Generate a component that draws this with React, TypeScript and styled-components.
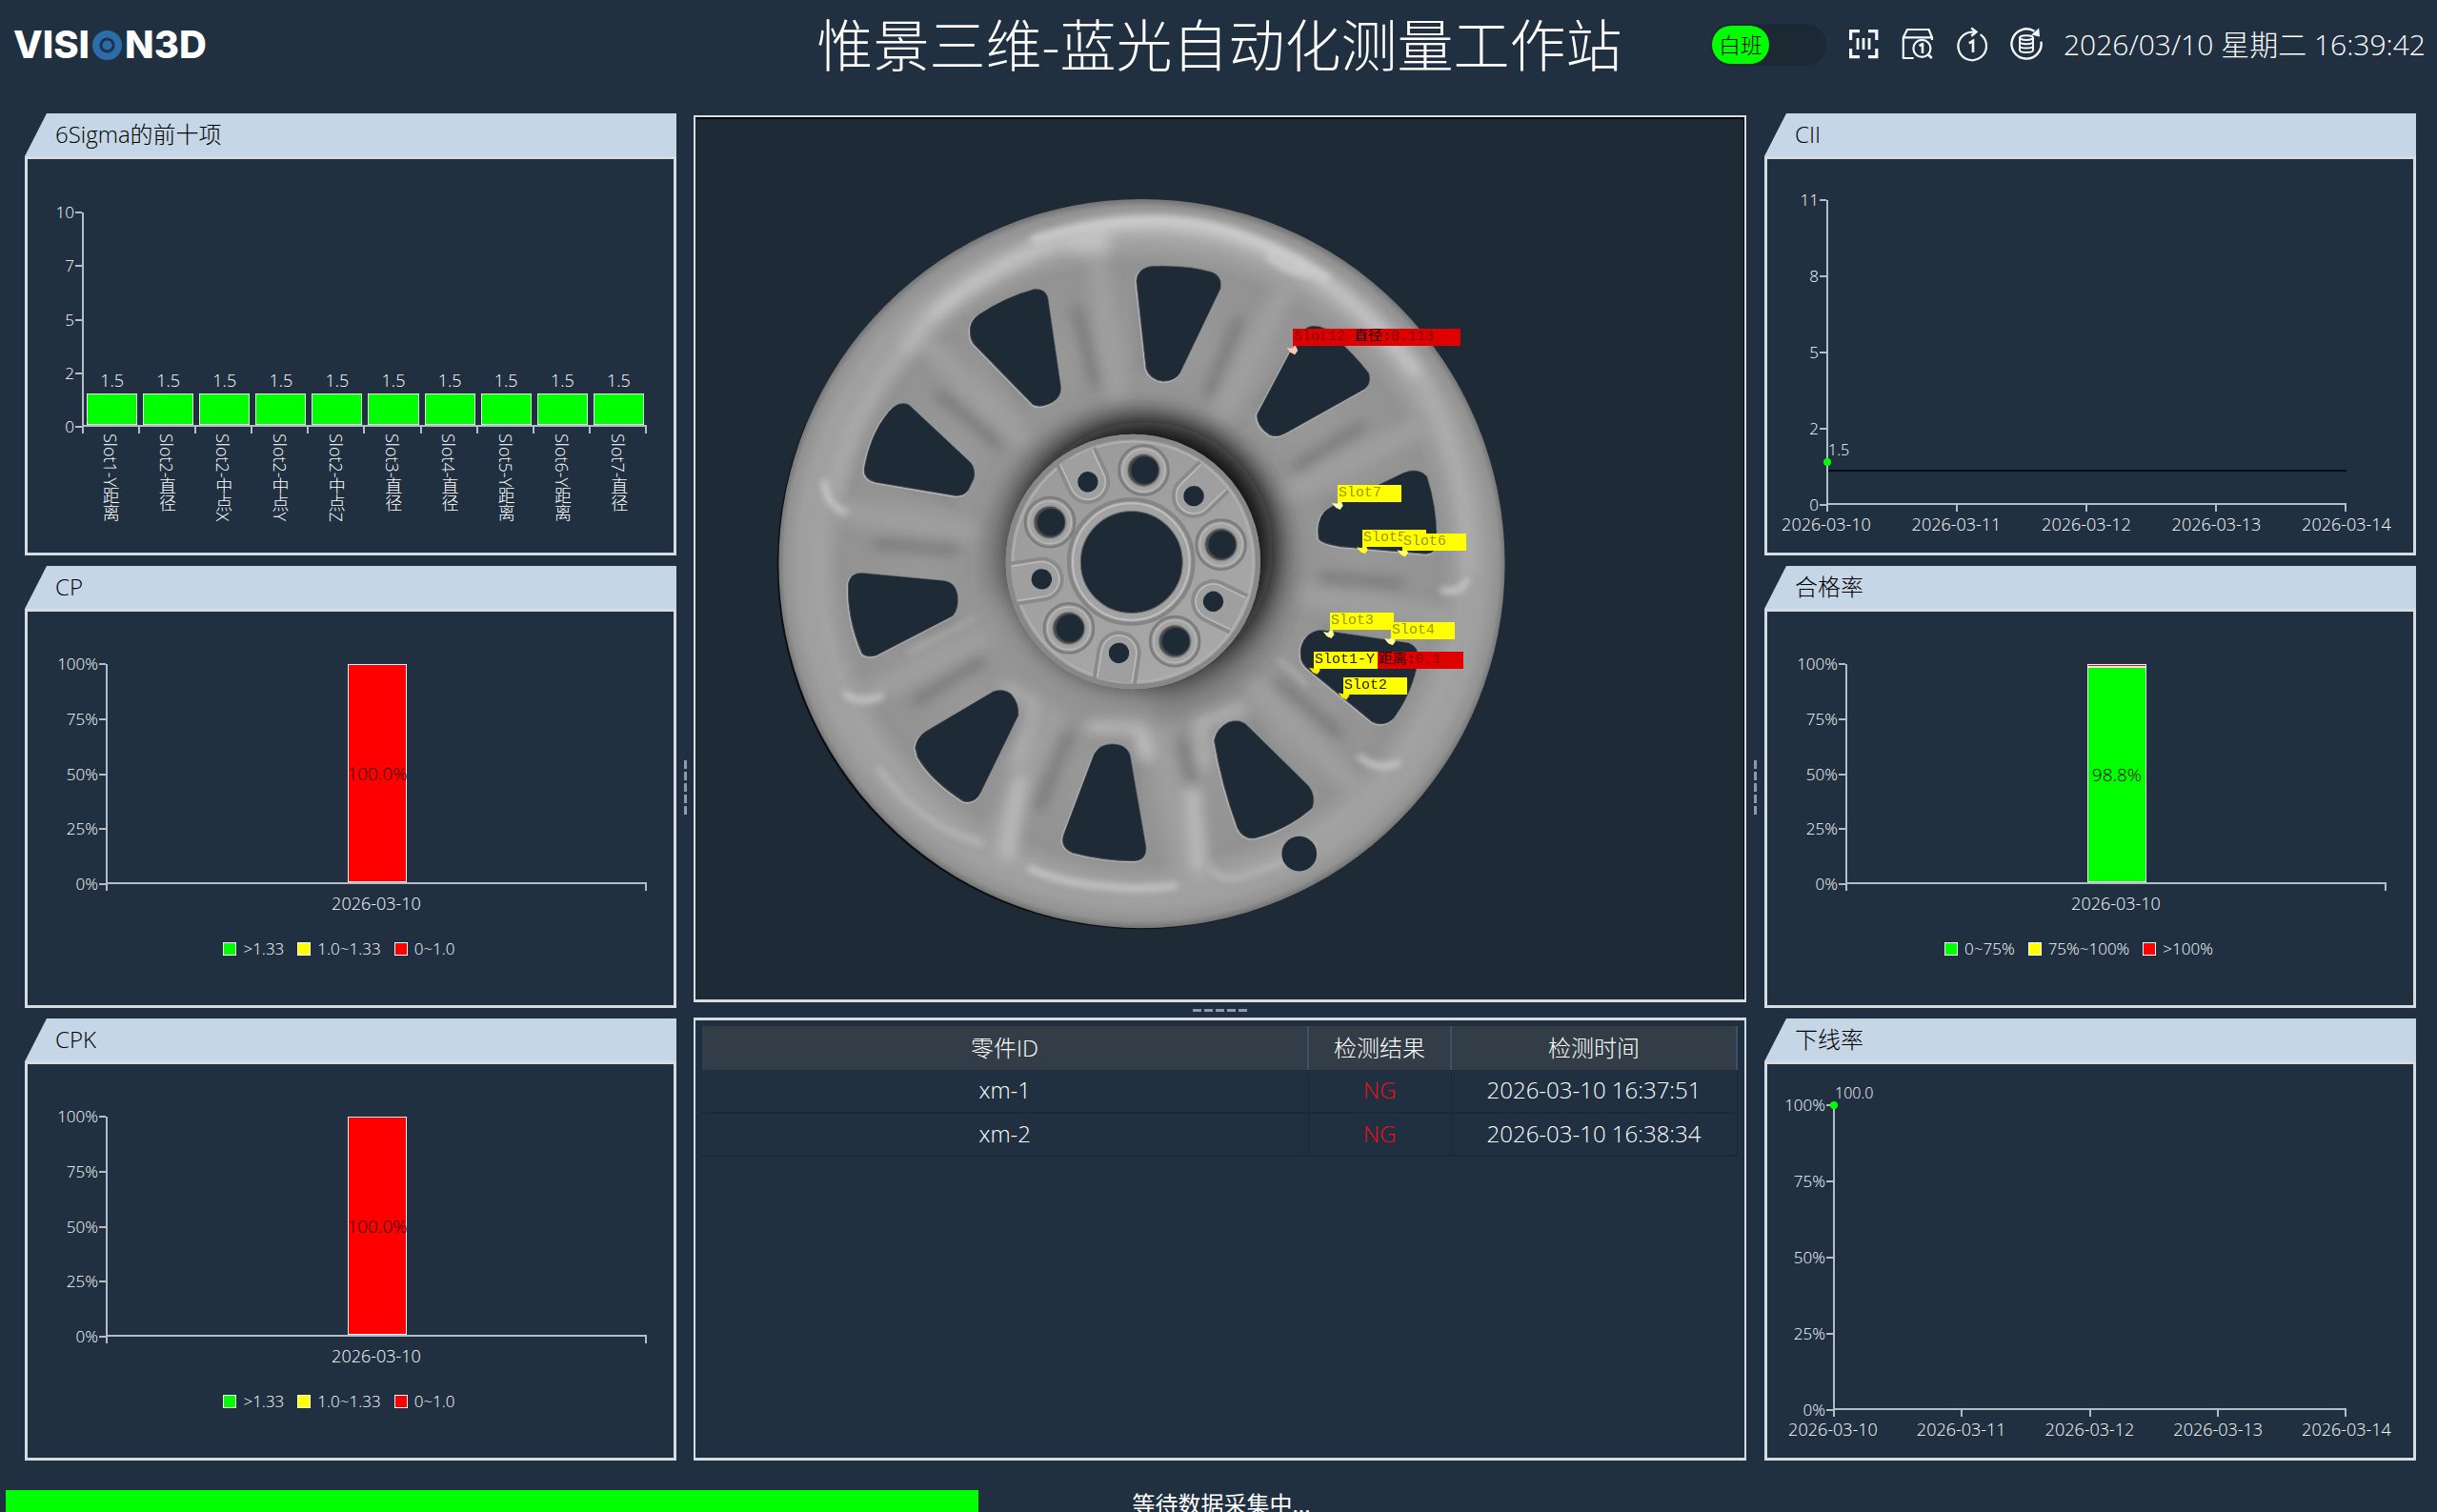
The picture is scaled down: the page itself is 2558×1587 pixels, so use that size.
import React from "react";
import styled, { createGlobalStyle } from "styled-components";

const color = {
  page: "#203041",
  viewer: "#1e2a36",
  frame: "#d6dce2",
  band: "#c5d6e6",
  axis: "#b3bdc8",
  text: "#ffffff",
  green: "#00ff00",
  yellow: "#ffff00",
  red: "#ff0000",
};

const GlobalStyle = createGlobalStyle`
  *, *::before, *::after { box-sizing: border-box; }
  html, body { margin: 0; padding: 0; background: ${color.page}; }
  body {
    overflow: hidden;
    color: ${color.text};
    font-family: "Open Sans", "Noto Sans CJK SC", sans-serif;
    font-weight: 300;
  }
`;

/* ---------- page frame ---------- */

const Page = styled.div`
  display: flex;
  flex-direction: column;
  height: 100vh;
  overflow: hidden;
`;

const Header = styled.header`
  display: grid;
  grid-template-columns: 1fr auto 1fr;
  align-items: center;
  height: 94px;
  margin-bottom: 25px;
  padding: 0 12px 0 14px;
`;

const Logo = styled.div`
  display: flex;
  align-items: center;
  gap: 3px;
  color: #fff;
  font-family: Inter, sans-serif;
  font-size: 40px;
  font-weight: 800;
  line-height: 48px;
`;

const Title = styled.h1`
  margin: 0;
  color: #fff;
  font-size: 59px;
  font-weight: 300;
  line-height: 80px;
  white-space: nowrap;
`;

const Tools = styled.div`
  display: flex;
  align-items: center;
  justify-content: flex-end;
  gap: 21px;
`;

const ShiftSwitch = styled.label`
  display: flex;
  width: 122px;
  height: 44px;
  padding: 2px;
  border-radius: 22px;
  background: #1c2833;
  cursor: pointer;
`;

const SwitchInput = styled.input`
  appearance: none;
  width: 0;
  height: 0;
  margin: 0;
`;

const Knob = styled.span`
  width: 60px;
  border-radius: 20px;
  background: ${color.green};
  color: #000;
  font-size: 23px;
  line-height: 40px;
  text-align: center;
`;

const IconRow = styled.div`
  display: flex;
  gap: 21px;
`;

const IconButton = styled.button`
  display: block;
  width: 36px;
  height: 36px;
  padding: 0;
  border: 0;
  background: none;
  color: #f5f9fc;
  cursor: pointer;

  svg {
    display: block;
    overflow: visible;
  }
`;

const Clock = styled.time`
  font-size: 30px;
  line-height: 40px;
  white-space: nowrap;
`;

const Main = styled.main`
  display: grid;
  flex: 1;
  grid-template-columns: 684fr 18px 1105fr 19px 684fr;
  min-height: 0;
  padding: 0 22px 0 26px;
`;

const SideColumn = styled.div`
  display: grid;
  grid-template-rows: repeat(3, minmax(0, 1fr));
  gap: 11px;
  min-width: 0;
`;

const CenterColumn = styled.div`
  display: grid;
  grid-template-rows: 931fr 16px 465fr;
  min-width: 0;
  padding-top: 2px;
`;

const Splitter = styled.div<{ $vertical?: boolean }>`
  display: flex;
  flex-direction: ${(p) => (p.$vertical ? "column" : "row")};
  align-items: center;
  justify-content: center;
  gap: 3px;

  span {
    width: ${(p) => (p.$vertical ? "3px" : "9px")};
    height: ${(p) => (p.$vertical ? "9px" : "3px")};
    background: #8d9ba8;
  }
`;

/* ---------- panels ---------- */

const PanelBox = styled.section`
  display: flex;
  flex-direction: column;
  min-height: 0;
`;

const PanelTitle = styled.h2`
  height: 45px;
  margin: 0;
  padding-left: 32px;
  background: ${color.band};
  clip-path: polygon(23px 0, 100% 0, 100% 100%, 0 100%);
  color: #000;
  font-size: 24px;
  font-weight: 300;
  line-height: 44px;
`;

const PanelBody = styled.div`
  display: flex;
  flex: 1;
  flex-direction: column;
  min-height: 0;
  border: 3px solid ${color.frame};
`;

/* ---------- charts ---------- */

const ChartGrid = styled.div<{ $top: number; $left: number; $right: number; $bottom: number }>`
  display: grid;
  flex: 1;
  grid-template-columns: ${(p) => p.$left}px minmax(0, 1fr);
  grid-template-rows: minmax(0, 1fr) auto;
  min-height: 0;
  padding: ${(p) => p.$top}px ${(p) => p.$right}px ${(p) => p.$bottom}px 0;
`;

const YAxis = styled.div`
  display: flex;
  flex-direction: column;
  justify-content: space-between;
`;

const YTick = styled.div`
  display: flex;
  align-items: center;
  justify-content: flex-end;
  gap: 1px;
  height: 0;
  font-size: 17px;
  line-height: 24px;

  &::after {
    content: "";
    width: 7px;
    height: 2px;
    background: ${color.axis};
  }
`;

const Plot = styled.div`
  position: relative;
  display: flex;
  align-items: flex-end;
  border-bottom: 2px solid ${color.axis};
  border-left: 2px solid ${color.axis};
`;

const XAxis = styled.div`
  grid-column: 2;
`;

const XTicks = styled.div`
  display: flex;
  justify-content: space-between;
  height: 7px;

  span {
    width: 2px;
    background: ${color.axis};
  }
`;

const XLabels = styled.div<{ $between?: boolean }>`
  display: flex;
  justify-content: ${(p) => (p.$between ? "space-between" : "center")};
  font-size: 18px;
  line-height: 26px;
  white-space: nowrap;

  span {
    display: flex;
    justify-content: center;
    width: ${(p) => (p.$between ? "0" : "auto")};
  }
`;

const VerticalLabels = styled.div`
  display: grid;
  grid-template-columns: repeat(10, 1fr);
  justify-items: center;
  height: 125px;
  font-size: 18px;
  line-height: 24px;

  span {
    writing-mode: vertical-rl;
    white-space: nowrap;
  }
`;

const Group = styled.div`
  display: flex;
  flex: 1;
  flex-direction: column;
  align-items: center;
  justify-content: flex-end;
  height: 100%;
  padding: 0 3px;
  font-size: 18px;
  line-height: 27px;
`;

const ValueBar = styled.div`
  flex: none;
  width: 100%;
  border: 1px solid #e6f5e6;
  background: ${color.green};
`;

const Stack = styled.div`
  display: flex;
  flex-direction: column;
  width: 62px;
  height: 100%;
  margin: 0 auto;
`;

const Segment = styled.div<{ $fill: string }>`
  display: flex;
  align-items: center;
  justify-content: center;
  border: 1px solid #f4f0f0;
  background: ${(p) => p.$fill};
  color: #180404;
  font-size: 19px;
  line-height: 24px;
`;

const Legend = styled.ul`
  display: flex;
  justify-content: center;
  gap: 14px;
  margin: 0;
  padding: 22px 24px 46px 0;
  list-style: none;
  font-size: 17px;
  line-height: 26px;
`;

const LegendItem = styled.li<{ $fill: string }>`
  display: flex;
  align-items: center;
  gap: 7px;

  &::before {
    content: "";
    width: 14px;
    height: 14px;
    border: 1px solid #fff;
    background: ${(p) => p.$fill};
  }
`;

const Point = styled.div`
  position: absolute;
  left: -5px;
  width: 8px;
  height: 8px;
  border-radius: 50%;
  background: ${color.green};
  transform: translateY(50%);
`;

const PointLabel = styled.div`
  position: absolute;
  left: 0;
  padding-bottom: 2px;
  font-size: 16px;
  line-height: 22px;
`;

const LimitLine = styled.div`
  position: absolute;
  right: 0;
  left: 0;
  height: 2px;
  background: #060d16;
`;

/* ---------- 3D viewer ---------- */

const Viewer = styled.section`
  min-height: 0;
  overflow: hidden;
  border: 2px solid ${color.frame};
  border-bottom-width: 3px;
  background: ${color.viewer};
  box-shadow: inset 0 2px 0 #05080c, inset -1px 0 0 #05080c;
`;

const Scene = styled.div`
  position: relative;
  width: 800px;
  height: 800px;
  margin: 67px 0 0 70px;

  svg {
    display: block;
  }
`;

const Tag = styled.div<{ $red?: boolean; $ink: string }>`
  position: absolute;
  height: 18px;
  padding-left: 1px;
  overflow: hidden;
  background: ${(p) => (p.$red ? "#df0000" : color.yellow)};
  color: ${(p) => p.$ink};
  font-family: "Liberation Mono", "Noto Sans CJK SC", monospace;
  font-size: 15px;
  font-weight: 400;
  line-height: 18px;
  white-space: nowrap;

  b {
    color: #240000;
    font-weight: 400;
  }
`;

/* ---------- results table ---------- */

const ResultBox = styled.section`
  min-height: 0;
  padding: 6px 7px;
  border: 2px solid ${color.frame};
  border-width: 3px 2px;
`;

const Results = styled.table`
  width: 100%;
  border-collapse: collapse;
  table-layout: fixed;
  font-size: 24px;
  line-height: 32px;
  text-align: center;

  th {
    height: 46px;
    padding: 0;
    border-right: 2px solid #3c5266;
    background: #333d47;
    font-weight: 300;
  }

  td {
    height: 45px;
    padding: 0 0 2px;
    border-right: 1px solid #1c2a38;
    border-bottom: 2px solid #1b2937;
  }
`;

const Verdict = styled.td`
  color: #f20d16;
`;

/* ---------- footer ---------- */

const Footer = styled.footer`
  display: grid;
  flex: none;
  height: 23px;
  margin-top: 31px;
  padding-left: 6px;
  overflow: hidden;
`;

const Progress = styled.progress`
  grid-area: 1 / 1;
  appearance: none;
  width: 100%;
  height: 34px;
  border: 0;
  background: transparent;

  &::-webkit-progress-bar {
    background: transparent;
  }
  &::-webkit-progress-value {
    background: ${color.green};
  }
  &::-moz-progress-bar {
    background: ${color.green};
  }
`;

const Status = styled.label`
  grid-area: 1 / 1;
  z-index: 1;
  color: #fff;
  font-size: 24px;
  font-weight: 400;
  line-height: 30px;
  text-align: center;
`;

/* ---------- icons ---------- */

const svgProps = {
  width: 36,
  height: 36,
  viewBox: "0 0 36 36",
  fill: "none",
  stroke: "currentColor",
  "aria-hidden": true,
} as const;

const ScanIcon = () => (
  <svg {...svgProps} strokeWidth="3.2">
    <path d="M4.6 13V3.6H14M23 3.6H31.8V13M31.8 22V30.6H23M14 30.6H4.6V22" />
    <path d="M12 11V23M18 11V23M24 11V23" strokeWidth="2.8" />
  </svg>
);

const BoxSearchIcon = () => (
  <svg {...svgProps} strokeWidth="2.2" strokeLinejoin="round">
    <path d="M7 2H29.6L33 10.3H2.8Z" />
    <path d="M2.8 10.3V32H13.6M33 10.3V13" />
    <circle cx="22.4" cy="21.8" r="9" />
    <path d="M28.8 28.2L32.8 32" strokeWidth="2.6" />
    <path d="M19.6 19.2L23 17V27" strokeWidth="2.6" />
  </svg>
);

const RepeatOnceIcon = () => (
  <svg {...svgProps} strokeWidth="2.2">
    <path d="M22 4.6H18.3A14.8 14.8 0 1 0 26.6 7.2" />
    <path d="M17.2 0.4L22.4 4.6L17.2 8.8" strokeWidth="2.4" />
    <path d="M14.8 16.4L19 13.8V26" strokeWidth="2.6" />
  </svg>
);

const DataRefreshIcon = () => (
  <svg {...svgProps} strokeWidth="2.4">
    <path d="M26.4 3.8A15.6 15.6 0 1 0 33.5 14.6" />
    <path d="M31.2 0.4L32 9.6L23.2 7.4Z" fill="currentColor" stroke="none" />
    <g strokeWidth="2">
      <ellipse cx="18" cy="10.6" rx="7" ry="2.4" />
      <path d="M11 10.6V23.4C11 26.8 25 26.8 25 23.4V10.6" />
      <path d="M11 14.8C11 18 25 18 25 14.8M11 19C11 22.4 25 22.4 25 19" />
    </g>
  </svg>
);

const LogoRing = () => (
  <svg width="31" height="31" viewBox="0 0 31 31" aria-hidden="true">
    <circle cx="15.5" cy="15.5" r="15.5" fill="#2c6ca8" />
    <circle cx="15.5" cy="15.5" r="6.6" fill="none" stroke="#18344f" strokeWidth="3" />
  </svg>
);

/* ---------- wheel drawing ---------- */

const WINDOWS = [
  "M770 205Q772 180 800 175Q870 172 925 187Q948 196 943 222L860 395Q850 412 825 412Q798 408 790 385Z",
  "M428 312Q425 290 445 275Q500 238 560 222Q582 220 588 240L615 425Q615 445 598 455Q575 468 558 460L436 335Q428 325 428 312Z",
  "M210 592Q222 520 260 475Q280 450 302 460L430 580Q440 595 436 612L425 635Q415 650 395 647L235 620Q208 612 210 592Z",
  "M177 830Q180 806 205 806L375 822Q398 826 402 850Q406 880 392 895L235 976Q215 982 205 970Q175 900 177 830Z",
  "M315 1165Q318 1145 335 1133L475 1050Q495 1042 512 1055Q530 1075 527 1100L450 1258Q438 1282 415 1276Q350 1235 320 1185Z",
  "M683 1178Q695 1158 720 1158Q748 1158 757 1180L790 1370Q792 1398 765 1399Q700 1398 640 1382Q612 1370 620 1345Z",
  "M930 1150Q935 1125 960 1113Q985 1105 1000 1122L1125 1245Q1140 1265 1132 1290Q1080 1335 1015 1352Q990 1355 978 1330Q945 1240 930 1150Z",
  "M1108 975Q1105 955 1120 937Q1135 922 1155 924L1330 950Q1352 958 1350 985Q1340 1050 1300 1105Q1280 1125 1255 1112L1125 1005Q1108 992 1108 975Z",
  "M1145 735Q1140 700 1155 682Q1165 670 1190 662L1320 600Q1350 588 1368 608Q1388 670 1388 735Q1390 768 1365 767L1190 752Q1150 745 1145 735Z",
  "M1018 480L1095 335Q1110 298 1135 298Q1160 298 1175 318Q1220 358 1248 395Q1255 415 1240 428L1075 520Q1060 528 1045 522Q1018 505 1018 480Z",
];

const LUGS = [
  [785, 595],
  [592, 702],
  [631, 920],
  [849, 947],
  [944, 748],
];

const PINS = [
  [670, 619, -25],
  [888, 648, 46],
  [928, 865, 116],
  [734, 971, 189],
  [575, 819, 261],
];

const MARKERS = [
  [1090, 347, "#ffc4b8"],
  [1183, 666, "#ffffb0"],
  [1234, 757, "#ffff20"],
  [1317, 763, "#ffff60"],
  [1165, 931, "#ffffa0"],
  [1291, 945, "#ffffa0"],
  [1136, 1005, "#f0f000"],
  [1196, 1057, "#f0f000"],
] as const;

const SPOKES = Array.from({ length: 10 }, (_, i) => -8 + i * 36);

const Wheel = () => (
  <svg width="800" height="800" viewBox="0 0 1568 1568" role="img" aria-label="轮毂模型">
    <defs>
      <radialGradient id="disc" gradientUnits="userSpaceOnUse" cx="781" cy="787" r="750">
        <stop offset="0.36" stopColor="#7c7c7c" />
        <stop offset="0.46" stopColor="#949494" />
        <stop offset="0.6" stopColor="#989898" />
        <stop offset="0.82" stopColor="#929292" />
        <stop offset="0.88" stopColor="#a2a2a2" />
        <stop offset="0.94" stopColor="#9f9f9f" />
        <stop offset="0.98" stopColor="#929292" />
        <stop offset="1" stopColor="#727272" />
      </radialGradient>
      <linearGradient id="hub" x1="0" y1="0" x2="0.6" y2="1">
        <stop offset="0" stopColor="#989898" />
        <stop offset="1" stopColor="#a8a8a8" />
      </linearGradient>
      <filter id="soft6" filterUnits="userSpaceOnUse" x="0" y="0" width="1568" height="1568">
        <feGaussianBlur stdDeviation="7" />
      </filter>
      <filter id="soft14" filterUnits="userSpaceOnUse" x="0" y="0" width="1568" height="1568">
        <feGaussianBlur stdDeviation="14" />
      </filter>
      <filter id="soft30" filterUnits="userSpaceOnUse" x="0" y="0" width="1568" height="1568">
        <feGaussianBlur stdDeviation="28" />
      </filter>
      <clipPath id="discClip">
        <ellipse cx="781" cy="787" rx="747" ry="750" />
      </clipPath>
    </defs>

    <ellipse cx="777" cy="791" rx="746" ry="748" fill="#0b0d10" />
    <ellipse cx="781" cy="787" rx="747" ry="750" fill="url(#disc)" />

    <g clipPath="url(#discClip)" fill="none" strokeLinecap="round">
      {/* grooves running along both flanks of every spoke */}
      <g filter="url(#soft14)">
        {SPOKES.map((a) => (
          <g key={a} transform={`rotate(${a} 775 787)`}>
            <path d="M722 250L738 410" stroke="#727272" strokeWidth="18" />
            <path d="M860 250L838 390" stroke="#828282" strokeWidth="16" />
            <path d="M776 150L780 430" stroke="#9f9f9f" strokeWidth="44" />
          </g>
        ))}
        <path d="M150 640A645 645 0 0 1 330 310" stroke="#adadad" strokeWidth="20" />
        <path d="M335 290Q480 150 700 96Q900 70 1080 160Q1230 240 1350 400" stroke="#c6c6c6" strokeWidth="30" />
        <path d="M1350 400Q1450 560 1455 800" stroke="#b2b2b2" strokeWidth="20" />
        <path d="M340 280L300 340" stroke="#b8b8b8" strokeWidth="30" />
        <path d="M680 1120H776L790 1180" stroke="#c4c4c4" strokeWidth="26" />
        <path d="M500 1040L565 1070L520 1200" stroke="#b0b0b0" strokeWidth="22" />
        <path d="M530 1240L505 1380" stroke="#bababa" strokeWidth="34" />
        <path d="M985 1085L900 1115L910 1200" stroke="#b4b4b4" strokeWidth="22" />
        <path d="M885 1260L900 1410" stroke="#bababa" strokeWidth="34" />
        <path d="M640 130H700" stroke="#c0c0c0" strokeWidth="34" />
      </g>
      {/* specular edges on the rim and under the windows */}
      <g filter="url(#soft6)" stroke="#cdcdcd" strokeWidth="11">
        <path d="M560 120Q760 60 920 92Q1050 125 1160 200" strokeWidth="16" />
        <path d="M128 620Q132 668 170 680" />
        <path d="M172 1055Q195 1078 245 1060" />
        <path d="M240 1210Q330 1330 450 1362" stroke="#b8b8b8" />
        <path d="M550 1415Q620 1445 710 1452Q780 1460 850 1450" />
        <path d="M925 1415Q945 1445 990 1430Q1070 1405 1130 1365" stroke="#b6b6b6" />
        <path d="M1230 1185Q1265 1215 1308 1198" />
        <path d="M1400 842Q1440 850 1450 820" />
        <path d="M300 970L440 898" stroke="#b0b0b0" strokeWidth="7" />
        <path d="M1065 985L1120 1035" stroke="#b8b8b8" strokeWidth="7" />
        <path d="M1045 155Q1080 185 1130 190" strokeWidth="18" stroke="#c8c8c8" />
      </g>
      {/* shadow cast into the bowl around the hub */}
      <circle cx="772" cy="772" r="290" fill="#6a6a6a" filter="url(#soft30)" />
      <circle cx="788" cy="758" r="262" fill="#101010" filter="url(#soft30)" />
      <path d="M470 880Q560 1090 790 1090" stroke="#999" strokeWidth="50" filter="url(#soft30)" />
    </g>

    <g stroke="#b4b4b4" strokeWidth="3">
      {WINDOWS.map((d) => (
        <path key={d} d={d} transform="translate(-2 2)" fill="#2a2a2a" />
      ))}
    </g>
    <g fill={color.viewer} stroke="#6d7174" strokeWidth="1">
      {WINDOWS.map((d) => (
        <path key={d} d={d} />
      ))}
    </g>
    <circle cx="1105" cy="1384" r="36" fill={color.viewer} />

    <circle cx="763" cy="783" r="262" fill="url(#hub)" />
    <circle cx="763" cy="783" r="257" fill="none" stroke="#888" strokeWidth="10" />
    <circle cx="763" cy="783" r="247" fill="none" stroke="#b0b0b0" strokeWidth="4" />

    {PINS.map(([x, y, a]) => (
      <g key={a} transform={`translate(${x} ${y}) rotate(${a})`}>
        <path d="M-42 -58V0A42 42 0 0 0 42 0V-58" fill="#9f9f9f" stroke="#8a8a8a" strokeWidth="7" />
        <path d="M-36 -56V0A36 36 0 0 0 36 0V-56" fill="none" stroke="#bcbcbc" strokeWidth="3" />
        <circle r="21" fill={color.viewer} />
      </g>
    ))}

    <circle cx="759" cy="783" r="128" fill="#a2a2a2" stroke="#858585" strokeWidth="8" />
    <circle cx="759" cy="783" r="120" fill="none" stroke="#bebebe" strokeWidth="4" />
    <circle cx="760" cy="784" r="105" fill={color.viewer} stroke="#6f6f6f" strokeWidth="2" />

    {LUGS.map(([x, y]) => (
      <g key={x} transform={`translate(${x} ${y})`}>
        <circle r="51" fill="#979797" stroke="#7c7c7c" strokeWidth="5" />
        <circle r="44" fill="#a4a4a4" stroke="#bababa" strokeWidth="3" />
        <circle r="35" fill="#8a8a8a" />
        <circle r="32" fill="#4a4a4a" />
        <circle cx="2" r="28" fill={color.viewer} />
      </g>
    ))}

    {MARKERS.map(([x, y, fill]) => (
      <path key={x} d={`M${x - 11} ${y - 4}l10 2 8-8 5 12-6 8-9-4z`} fill={fill} />
    ))}
  </svg>
);

/* ---------- composed parts ---------- */

const Grip = ({ vertical }: { vertical?: boolean }) => (
  <Splitter $vertical={vertical} role="separator" aria-orientation={vertical ? "vertical" : "horizontal"}>
    {[0, 1, 2, 3, 4].map((i) => (
      <span key={i} />
    ))}
  </Splitter>
);

const Panel = ({ title, children }: { title: string; children: React.ReactNode }) => (
  <PanelBox>
    <PanelTitle>{title}</PanelTitle>
    <PanelBody>{children}</PanelBody>
  </PanelBox>
);

const YScale = ({ ticks }: { ticks: string[] }) => (
  <YAxis>
    {ticks.map((t) => (
      <YTick key={t}>{t}</YTick>
    ))}
  </YAxis>
);

const TickMarks = ({ count }: { count: number }) => (
  <XTicks>
    {Array.from({ length: count }, (_, i) => (
      <span key={i} />
    ))}
  </XTicks>
);

const PERCENT = ["100%", "75%", "50%", "25%", "0%"];
const DATES = ["2026-03-10", "2026-03-11", "2026-03-12", "2026-03-13", "2026-03-14"];

const SIGMA = [
  "Slot1-Y距离",
  "Slot2-直径",
  "Slot2-中点X",
  "Slot2-中点Y",
  "Slot2-中点Z",
  "Slot3-直径",
  "Slot4-直径",
  "Slot5-Y距离",
  "Slot6-Y距离",
  "Slot7-直径",
].map((name) => ({ name, value: 1.5 }));

const SigmaChart = () => (
  <ChartGrid $top={56} $left={57} $right={28} $bottom={0}>
    <YScale ticks={["10", "7", "5", "2", "0"]} />
    <Plot>
      {SIGMA.map((s) => (
        <Group key={s.name}>
          {s.value}
          <ValueBar style={{ height: `${s.value * 10}%` }} />
        </Group>
      ))}
    </Plot>
    <XAxis>
      <TickMarks count={11} />
      <VerticalLabels>
        {SIGMA.map((s) => (
          <span key={s.name}>{s.name}</span>
        ))}
      </VerticalLabels>
    </XAxis>
  </ChartGrid>
);

type Part = { share: number; fill: string; label?: string };

const PercentChart = ({ parts, legend }: { parts: Part[]; legend: [string, string, string] }) => (
  <>
    <ChartGrid $top={55} $left={82} $right={28} $bottom={0}>
      <YScale ticks={PERCENT} />
      <Plot>
        <Stack>
          {parts.map((p) => (
            <Segment key={p.fill} $fill={p.fill} style={{ height: `${p.share}%` }}>
              {p.label}
            </Segment>
          ))}
        </Stack>
      </Plot>
      <XAxis>
        <TickMarks count={2} />
        <XLabels>
          <span>2026-03-10</span>
        </XLabels>
      </XAxis>
    </ChartGrid>
    <Legend>
      <LegendItem $fill={color.green}>{legend[0]}</LegendItem>
      <LegendItem $fill={color.yellow}>{legend[1]}</LegendItem>
      <LegendItem $fill={color.red}>{legend[2]}</LegendItem>
    </Legend>
  </>
);

const TrendChart = (props: { ticks: string[]; left: number; level: number; label: string; limit?: number }) => (
  <ChartGrid $top={43} $left={props.left} $right={70} $bottom={17}>
    <YScale ticks={props.ticks} />
    <Plot>
      {props.limit !== undefined && <LimitLine style={{ bottom: `${props.limit}%` }} />}
      <Point style={{ bottom: `${props.level}%` }} />
      <PointLabel style={{ bottom: `${props.level}%` }}>{props.label}</PointLabel>
    </Plot>
    <XAxis>
      <TickMarks count={5} />
      <XLabels $between>
        {DATES.map((d) => (
          <span key={d}>{d}</span>
        ))}
      </XLabels>
    </XAxis>
  </ChartGrid>
);

const olive = "#9a9500";
const dark = "#2a2200";

const TAGS = [
  { x: 604, y: 319, w: 67, ink: olive, text: "Slot7" },
  { x: 630, y: 366, w: 67, ink: olive, text: "Slot5" },
  { x: 672, y: 370, w: 67, ink: olive, text: "Slot6" },
  { x: 596, y: 453, w: 67, ink: olive, text: "Slot3" },
  { x: 660, y: 463, w: 67, ink: olive, text: "Slot4" },
  { x: 579, y: 494, w: 67, ink: dark, text: "Slot1-Y" },
  { x: 610, y: 521, w: 67, ink: dark, text: "Slot2" },
];

const ROWS = [
  { id: "xm-1", verdict: "NG", time: "2026-03-10 16:37:51" },
  { id: "xm-2", verdict: "NG", time: "2026-03-10 16:38:34" },
];

export default function App() {
  return (
    <Page>
      <GlobalStyle />
      <Header>
        <Logo>
          <span>VISI</span>
          <LogoRing />
          <span>N3D</span>
        </Logo>
        <Title>惟景三维-蓝光自动化测量工作站</Title>
        <Tools>
          <ShiftSwitch>
            <SwitchInput type="checkbox" role="switch" />
            <Knob>白班</Knob>
          </ShiftSwitch>
          <IconRow>
            <IconButton type="button" aria-label="扫码">
              <ScanIcon />
            </IconButton>
            <IconButton type="button" aria-label="查询">
              <BoxSearchIcon />
            </IconButton>
            <IconButton type="button" aria-label="单次">
              <RepeatOnceIcon />
            </IconButton>
            <IconButton type="button" aria-label="刷新数据">
              <DataRefreshIcon />
            </IconButton>
          </IconRow>
          <Clock dateTime="2026-03-10T16:39:42">2026/03/10 星期二 16:39:42</Clock>
        </Tools>
      </Header>

      <Main>
        <SideColumn>
          <Panel title="6Sigma的前十项">
            <SigmaChart />
          </Panel>
          <Panel title="CP">
            <PercentChart
              parts={[{ share: 100, fill: color.red, label: "100.0%" }]}
              legend={[">1.33", "1.0~1.33", "0~1.0"]}
            />
          </Panel>
          <Panel title="CPK">
            <PercentChart
              parts={[{ share: 100, fill: color.red, label: "100.0%" }]}
              legend={[">1.33", "1.0~1.33", "0~1.0"]}
            />
          </Panel>
        </SideColumn>

        <Grip vertical />

        <CenterColumn>
          <Viewer>
            <Scene>
              <Wheel />
              <Tag $red $ink="#8a0000" style={{ left: 557, top: 155, width: 176 }}>
                Slot12-<b>直径:</b>0.113
              </Tag>
              {TAGS.map((t) => (
                <Tag key={t.text} $ink={t.ink} style={{ left: t.x, top: t.y, width: t.w }}>
                  {t.text}
                </Tag>
              ))}
              <Tag $red $ink="#8a0000" style={{ left: 646, top: 494, width: 90 }}>
                <b>距离:</b>0.1
              </Tag>
            </Scene>
          </Viewer>
          <Grip />
          <ResultBox>
            <Results>
              <colgroup>
                <col />
                <col style={{ width: 150 }} />
                <col style={{ width: 300 }} />
              </colgroup>
              <thead>
                <tr>
                  <th scope="col">零件ID</th>
                  <th scope="col">检测结果</th>
                  <th scope="col">检测时间</th>
                </tr>
              </thead>
              <tbody>
                {ROWS.map((r) => (
                  <tr key={r.id}>
                    <td>{r.id}</td>
                    <Verdict>{r.verdict}</Verdict>
                    <td>{r.time}</td>
                  </tr>
                ))}
              </tbody>
            </Results>
          </ResultBox>
        </CenterColumn>

        <Grip vertical />

        <SideColumn>
          <Panel title="CII">
            <TrendChart ticks={["11", "8", "5", "2", "0"]} left={62} level={13.5} label="1.5" limit={10.5} />
          </Panel>
          <Panel title="合格率">
            <PercentChart
              parts={[
                { share: 1.2, fill: color.red },
                { share: 98.8, fill: color.green, label: "98.8%" },
              ]}
              legend={["0~75%", "75%~100%", ">100%"]}
            />
          </Panel>
          <Panel title="下线率">
            <TrendChart ticks={PERCENT} left={69} level={100} label="100.0" />
          </Panel>
        </SideColumn>
      </Main>

      <Footer>
        <Progress id="collect" value={40} max={100} />
        <Status htmlFor="collect">等待数据采集中...</Status>
      </Footer>
    </Page>
  );
}
